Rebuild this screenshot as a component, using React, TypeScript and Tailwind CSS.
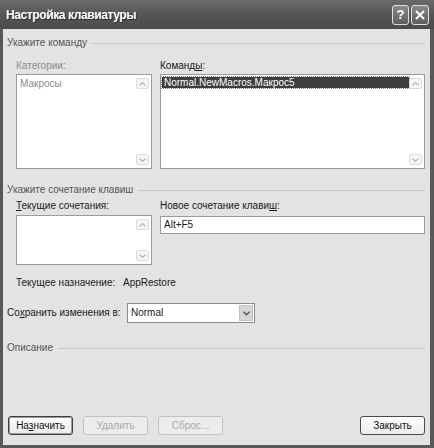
import React from "react";

// Скролл-стрелки внутри списка (неактивные)
const ScrollArrows = () => (
  <div className="flex flex-col justify-between w-[13px] my-[3px] mr-[2px]">
    <div className="h-[11px] border border-[#dcdcdc] bg-[#f6f6f6] rounded-[2px] flex items-center justify-center">
      <svg width="7" height="4" viewBox="0 0 7 4">
        <path d="M0.5 3.5 L3.5 0.5 L6.5 3.5" fill="none" stroke="#b8b8b8" strokeWidth="1.2" />
      </svg>
    </div>
    <div className="h-[11px] border border-[#dcdcdc] bg-[#f6f6f6] rounded-[2px] flex items-center justify-center">
      <svg width="7" height="4" viewBox="0 0 7 4">
        <path d="M0.5 0.5 L3.5 3.5 L6.5 0.5" fill="none" stroke="#b8b8b8" strokeWidth="1.2" />
      </svg>
    </div>
  </div>
);

const SectionHeader = ({ title }: { title: string }) => (
  <div className="flex items-center h-[14px] gap-[5px]">
    <span className="text-[#555] whitespace-nowrap">{title}</span>
    <div className="flex-1 h-px bg-[#c9c9c9]" />
  </div>
);

const Button = ({
  children,
  disabled,
  isDefault,
}: {
  children: React.ReactNode;
  disabled?: boolean;
  isDefault?: boolean;
}) => (
  <div
    className={`w-[65px] h-[19px] rounded-[3px] flex items-center justify-center border whitespace-nowrap ${
      disabled
        ? "border-[#c2c2c2] bg-[#ececec] text-[#a8a8a8]"
        : isDefault
        ? "border-[#3f3f3f] bg-gradient-to-b from-[#ffffff] to-[#ebebeb] text-[#111] shadow-[inset_0_0_0_1px_#9a9a9a]"
        : "border-[#4a4a4a] bg-gradient-to-b from-[#ffffff] to-[#ebebeb] text-[#111]"
    }`}
  >
    {children}
  </div>
);

export default function App() {
  return (
    <div className="w-[434px] h-[448px] flex flex-col bg-[#585858] font-['Liberation_Sans',Arial,sans-serif] text-[10px] leading-none text-[#1a1a1a] whitespace-nowrap">
      {/* Заголовок окна */}
      <div className="h-[29px] flex items-center pl-[6px] pr-[5px] bg-gradient-to-b from-[#6b6b6b] via-[#555] to-[#4c4c4c]">
        <span className="text-white font-bold text-[12px] tracking-[-0.4px] [text-shadow:1px_1px_0_#2a2a2a]">
          Настройка клавиатуры
        </span>
        <div className="ml-auto flex gap-[2px]">
          <div className="w-[17px] h-[20px] rounded-[3px] border border-[#e0e0e0] bg-gradient-to-b from-[#8a8a8a] to-[#5e5e5e] flex items-center justify-center text-white font-bold text-[13px]">
            ?
          </div>
          <div className="w-[18px] h-[20px] rounded-[3px] border border-[#e0e0e0] bg-gradient-to-b from-[#8a8a8a] to-[#5e5e5e] flex items-center justify-center">
            <svg width="10" height="10" viewBox="0 0 10 10">
              <path d="M1 1 L9 9 M9 1 L1 9" stroke="white" strokeWidth="2" />
            </svg>
          </div>
        </div>
      </div>

      {/* Тело диалога */}
      <div className="flex-1 flex flex-col ml-[3px] mr-[4px] mb-[3px] bg-[#e3e3e3] pl-[4px] pr-[5px] pb-[10px]">
        <div className="mt-[7px]">
          <SectionHeader title="Укажите команду" />
        </div>

        <div className="grid grid-cols-[136px_1fr] gap-x-[8px] pl-[9px] mt-[11px]">
          <div className="h-[13px] text-[#8c8c8c]">Категории:</div>
          <div className="h-[13px]">
            Команд<span className="underline">ы</span>:
          </div>
          <div className="h-[95px] border border-[#9a9a9a] bg-white flex">
            <div className="flex-1 pl-[3px] pt-[4px] text-[#8c8c8c]">Макросы</div>
            <ScrollArrows />
          </div>
          <div className="h-[95px] border border-[#9a9a9a] bg-white flex">
            <div className="flex-1 pl-[1px] pt-[2px]">
              <div className="h-[11px] bg-[#3d3d3d] text-white pl-[2px] flex items-center outline-1 outline-dotted outline-[#888]">
                Normal.NewMacros.Макрос5
              </div>
            </div>
            <ScrollArrows />
          </div>
        </div>

        <div className="mt-[14px]">
          <SectionHeader title="Укажите сочетание клавиш" />
        </div>

        <div className="grid grid-cols-[136px_1fr] gap-x-[8px] pl-[9px] mt-[4px]">
          <div className="h-[14px]">
            <span className="underline">Т</span>екущие сочетания:
          </div>
          <div className="h-[14px]">
            Новое сочетание клави<span className="underline">ш</span>:
          </div>
          <div className="h-[50px] border border-[#9a9a9a] bg-white flex">
            <div className="flex-1" />
            <ScrollArrows />
          </div>
          <div>
            <div className="h-[18px] mt-[1px] border border-[#9a9a9a] bg-white flex items-center pl-[3px]">
              Alt+F5
            </div>
          </div>
        </div>

        <div className="flex items-center h-[14px] pl-[9px] mt-[11px]">
          <span className="w-[107px] shrink-0">Текущее назначение:</span>
          <span>AppRestore</span>
        </div>

        <div className="flex items-center mt-[13px] h-[20px]">
          <span className="w-[120px] shrink-0">
            Со<span className="underline">х</span>ранить изменения в:
          </span>
          <div className="w-[128px] h-[20px] border border-[#8a8a8a] bg-white flex items-center">
            <span className="flex-1 pl-[3px]">Normal</span>
            <div className="w-[14px] h-[16px] mr-[1px] bg-[#d6d6d6] border border-[#c4c4c4] flex items-center justify-center">
              <svg width="7" height="5" viewBox="0 0 7 5">
                <path d="M0.5 0.8 L3.5 3.8 L6.5 0.8" fill="none" stroke="#555" strokeWidth="1.4" />
              </svg>
            </div>
          </div>
        </div>

        <div className="mt-[18px]">
          <SectionHeader title="Описание" />
        </div>

        <div className="mt-auto flex gap-[10px] pl-[1px]">
          <Button isDefault>
            <span>
              На<span className="underline">з</span>начить
            </span>
          </Button>
          <Button disabled>Удалить</Button>
          <Button disabled>Сброс...</Button>
          <div className="ml-auto">
            <Button>Закрыть</Button>
          </div>
        </div>
      </div>
    </div>
  );
}
